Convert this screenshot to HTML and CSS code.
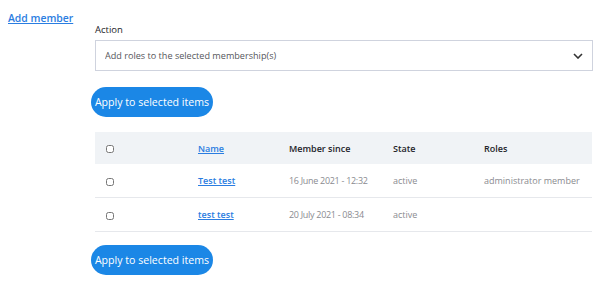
FILE: index.html
```html
<!DOCTYPE html>
<html lang="en">
<head>
    <meta charset="UTF-8">
    <title>Members</title>
    <link rel="stylesheet" href="styles.css">
</head>
<body>
    <div class="page">
        <div class="side">
            <a href="#" class="add-link">Add member</a>
        </div>
        <div class="main">
            <form class="bulk-form">
                <label class="field-label" for="action">Action</label>
                <div class="select-wrap">
                    <select id="action" class="select">
                        <option>Add roles to the selected membership(s)</option>
                    </select>
                    <svg class="chevron" width="10" height="6" viewBox="0 0 10 6">
                        <path d="M1 1 L5 5 L9 1" fill="none" stroke="#333" stroke-width="1.6"/>
                    </svg>
                </div>
                <button type="button" class="btn">Apply to selected items</button>

                <table class="members">
                    <colgroup>
                        <col class="c-check">
                        <col class="c-name">
                        <col class="c-since">
                        <col class="c-state">
                        <col>
                    </colgroup>
                    <thead>
                        <tr>
                            <th><input type="checkbox" class="cb"></th>
                            <th><a href="#">Name</a></th>
                            <th>Member since</th>
                            <th>State</th>
                            <th>Roles</th>
                        </tr>
                    </thead>
                    <tbody>
                        <tr>
                            <td><input type="checkbox" class="cb"></td>
                            <td><a href="#">Test test</a></td>
                            <td>16 June 2021 - 12:32</td>
                            <td>active</td>
                            <td>administrator member</td>
                        </tr>
                        <tr>
                            <td><input type="checkbox" class="cb"></td>
                            <td><a href="#">test test</a></td>
                            <td>20 July 2021 - 08:34</td>
                            <td>active</td>
                            <td></td>
                        </tr>
                    </tbody>
                </table>

                <button type="button" class="btn btn-bottom">Apply to selected items</button>
            </form>
        </div>
    </div>
</body>
</html>
```

FILE: styles.css
```css
body {
    margin: 0;
    font-family: 'Open Sans', sans-serif;
    color: #232429;
    background: #fff;
}

.page {
    display: flex;
    padding: 5px 9px 0 8px;
}

.side {
    width: 83px;
    flex-shrink: 0;
}

.add-link {
    color: #2a7de1;
    font-size: 10.4px;
    font-weight: 600;
    text-decoration: underline;
}

.main {
    flex-grow: 1;
    padding-top: 19px;
}

.field-label {
    display: block;
    margin-left: 4px;
    font-size: 9.5px;
    font-weight: 500;
    line-height: 12px;
    color: #232429;
    height: 16px;
}

.select-wrap {
    position: relative;
    margin-left: 4px;
}

.select {
    display: block;
    width: 100%;
    height: 31px;
    appearance: none;
    border: 1px solid #cfd3de;
    border-radius: 0;
    background: #fff;
    padding: 0 9px;
    font-family: inherit;
    font-size: 9.1px;
    color: #55565b;
}

.chevron {
    position: absolute;
    right: 10px;
    top: 13px;
}

.btn {
    display: block;
    margin-top: 16px;
    height: 30px;
    padding: 0;
    width: 122px;
    white-space: nowrap;
    background: #1b87e6;
    color: #fff;
    border: none;
    border-radius: 15px;
    font-family: inherit;
    font-size: 10.6px;
    cursor: pointer;
}

.btn-bottom {
    margin-top: 13px;
}

.members {
    margin-top: 15px;
    margin-left: 4px;
    width: calc(100% - 5px);
    border-collapse: collapse;
    table-layout: fixed;
    font-size: 9px;
}

.c-check { width: 103px; }
.c-name { width: 91px; }
.c-since { width: 104px; }
.c-state { width: 91px; }

.members th {
    background: #f0f3f6;
    height: 32px;
    text-align: left;
    font-weight: 600;
    color: #232429;
    padding: 0;
}

.members td {
    height: 33px;
    border-bottom: 1px solid #e6e8ec;
    color: #8a8b90;
    padding: 0;
}

.members td:nth-child(3) {
    letter-spacing: -0.3px;
}

.members a {
    color: #2a7de1;
    font-weight: 600;
    text-decoration: underline;
}

.cb {
    width: 8px;
    height: 8px;
    margin: 0 0 0 11px;
    vertical-align: middle;
}
```
